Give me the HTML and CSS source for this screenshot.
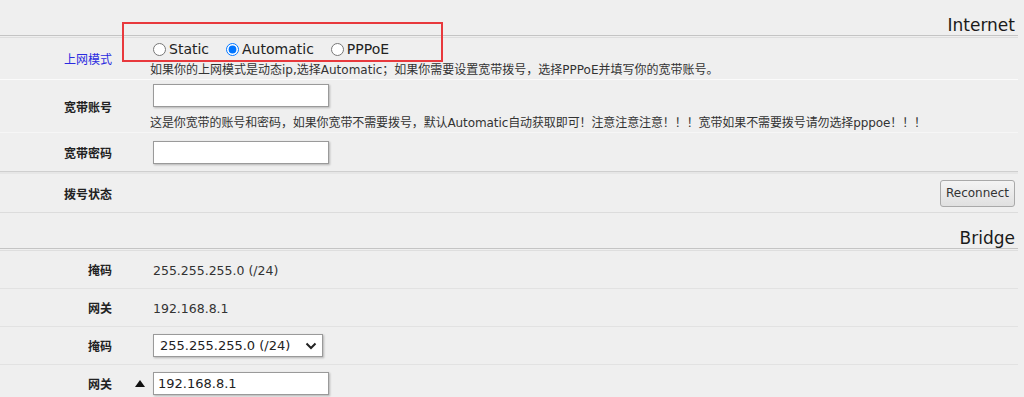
FILE: index.html
```html
<!DOCTYPE html>
<html lang="zh-CN">
<head>
<meta charset="utf-8">
<title>Internet</title>
<link rel="stylesheet" href="styles.css">
</head>
<body>
<div class="page">
  <div class="annot"></div>

  <section class="sect">
    <h2 class="sect-title">Internet</h2>
    <div class="rows">
      <div class="row row-mode">
        <div class="lbl lbl-blue">上网模式</div>
        <div class="ind"></div>
        <div class="val">
          <div class="radios">
            <label class="opt"><input type="radio" name="mode">Static</label>
            <label class="opt"><input type="radio" name="mode" checked>Automatic</label>
            <label class="opt"><input type="radio" name="mode">PPPoE</label>
          </div>
          <div class="desc">如果你的上网模式是动态ip,选择Automatic；如果你需要设置宽带拨号，选择PPPoE并填写你的宽带账号。</div>
        </div>
      </div>

      <div class="row row-user">
        <div class="lbl">宽带账号</div>
        <div class="ind"></div>
        <div class="val">
          <input class="txt" type="text">
          <div class="desc desc-user">这是你宽带的账号和密码，如果你宽带不需要拨号，默认Automatic自动获取即可！注意注意注意！！！宽带如果不需要拨号请勿选择pppoe！！！</div>
        </div>
      </div>

      <div class="row row-pass">
        <div class="lbl">宽带密码</div>
        <div class="ind"></div>
        <div class="val">
          <input class="txt" type="password">
        </div>
      </div>

      <div class="row row-dial">
        <div class="lbl">拨号状态</div>
        <div class="ind"></div>
        <div class="val val-dial">
          <button class="btn" type="button">Reconnect</button>
        </div>
      </div>
    </div>
  </section>

  <section class="sect">
    <h2 class="sect-title">Bridge</h2>
    <div class="rows">
      <div class="row row-plain">
        <div class="lbl">掩码</div>
        <div class="ind"></div>
        <div class="val"><span class="static">255.255.255.0 (/24)</span></div>
      </div>
      <div class="row row-plain">
        <div class="lbl">网关</div>
        <div class="ind"></div>
        <div class="val"><span class="static">192.168.8.1</span></div>
      </div>
      <div class="row row-field">
        <div class="lbl">掩码</div>
        <div class="ind"></div>
        <div class="val">
          <div class="sel-wrap">
            <select class="sel">
              <option>255.255.255.0 (/24)</option>
              <option>255.255.0.0 (/16)</option>
            </select>
            <svg class="chev" width="12" height="8" viewBox="0 0 12 8"><path d="M1.5 1.5 L6 6 L10.5 1.5" fill="none" stroke="#222" stroke-width="2"/></svg>
          </div>
        </div>
      </div>
      <div class="row row-field row-last">
        <div class="lbl">网关</div>
        <div class="ind"><svg class="tri" width="10" height="7" viewBox="0 0 10 7"><path d="M0 7 L5 0 L10 7 Z" fill="#111"/></svg></div>
        <div class="val"><input class="txt txt-val" type="text" value="192.168.8.1"></div>
      </div>
    </div>
  </section>
</div>
</body>
</html>
```

FILE: styles.css
```css
html, body {
  margin: 0;
  padding: 0;
}

body {
  background: #efefef;
  font-family: "DejaVu Sans", "Noto Sans CJK SC", sans-serif;
  color: #222;
  overflow: hidden;
}

.page {
  position: relative;
  width: 1018px;
}

.annot {
  position: absolute;
  left: 122px;
  top: 22px;
  width: 317px;
  height: 36px;
  border: 2px solid #e8393d;
  pointer-events: none;
  z-index: 5;
}

.sect-title {
  margin: 0;
  height: 36px;
  box-sizing: border-box;
  padding: 14px 3px 0 0;
  line-height: 22px;
  font-size: 17px;
  font-weight: normal;
  text-align: right;
  color: #1a1a1a;
  border-bottom: 1px solid #c4c4c4;
}

.rows {
  margin-top: 1px;
  border-top: 1px solid #dedede;
}

.row {
  display: grid;
  grid-template-columns: 112px 38px 1fr;
  align-items: center;
  border-bottom: 1px solid #e2e2e2;
}

.lbl {
  text-align: right;
  font-family: "Noto Sans CJK SC", sans-serif;
  font-size: 12px;
  font-weight: bold;
  color: #222;
}

.lbl-blue {
  color: #2b2be0;
  font-weight: normal;
}

.ind {
  display: flex;
  justify-content: flex-end;
  align-items: center;
  padding-right: 5px;
}

.tri {
  display: block;
}

.val {
  min-width: 0;
}

/* row 1 */
.row-mode {
  height: 41px;
  border-bottom: 1px solid #fbfbfb;
}

.radios {
  display: flex;
  align-items: center;
  height: 18px;
}

.opt {
  display: flex;
  align-items: center;
  font-size: 14px;
  color: #222;
  margin-right: 14px;
}

.opt input {
  width: 13px;
  height: 13px;
  margin: 0 3px 0 3px;
}

.desc {
  font-size: 12px;
  line-height: 14px;
  color: #333;
  white-space: nowrap;
  margin-top: 5px;
}

/* row 2 */
.row-user {
  height: 52px;
  border-bottom: 1px solid #f6f6f6;
}

.row-user .val {
  align-self: start;
  padding-top: 4px;
}

.desc-user {
  margin-top: 9px;
  letter-spacing: -0.1px;
}

.txt {
  display: block;
  box-sizing: border-box;
  width: 176px;
  height: 23px;
  margin: 0 0 0 3px;
  padding: 0 3px;
  border: 1px solid #9a9a9a;
  background: #fff;
  box-shadow: 1px 1px 2px rgba(0, 0, 0, 0.25);
  font-family: "DejaVu Sans", sans-serif;
  font-size: 13px;
  color: #222;
  outline: none;
}

/* row 3 */
.row-pass {
  height: 38px;
  border-bottom: 1px solid #cfcfcf;
  box-shadow: 0 2px 0 #e6e6e6;
  margin-bottom: 2px;
}

/* row 4 */
.row-dial {
  height: 38px;
  border-bottom: 1px solid #dcdcdc;
}

.val-dial {
  display: flex;
  justify-content: flex-end;
  padding-right: 3px;
}

.btn {
  box-sizing: border-box;
  width: 75px;
  height: 27px;
  padding: 0;
  border: 1px solid #a9a9a9;
  border-radius: 3px;
  background: linear-gradient(#f4f4f4, #e0e0e0);
  font-family: "DejaVu Sans", sans-serif;
  font-size: 12px;
  color: #333;
}

/* bridge */
.row-plain {
  height: 37px;
}

.static {
  padding-left: 3px;
  font-size: 12.5px;
  color: #333;
}

.row-field {
  height: 37px;
}

.row-last {
  border-bottom: none;
}

.sel-wrap {
  position: relative;
  width: 170px;
  margin-left: 3px;
}

.sel {
  display: block;
  box-sizing: border-box;
  width: 170px;
  height: 23px;
  padding: 0 0 0 6px;
  border: 1px solid #9a9a9a;
  border-radius: 0;
  background: #fff;
  box-shadow: 1px 1px 2px rgba(0, 0, 0, 0.25);
  appearance: none;
  -webkit-appearance: none;
  font-family: "DejaVu Sans", sans-serif;
  font-size: 13px;
  color: #222;
}

.chev {
  position: absolute;
  right: 6px;
  top: 8px;
  pointer-events: none;
}

.txt-val {
  padding-left: 4px;
}
```
